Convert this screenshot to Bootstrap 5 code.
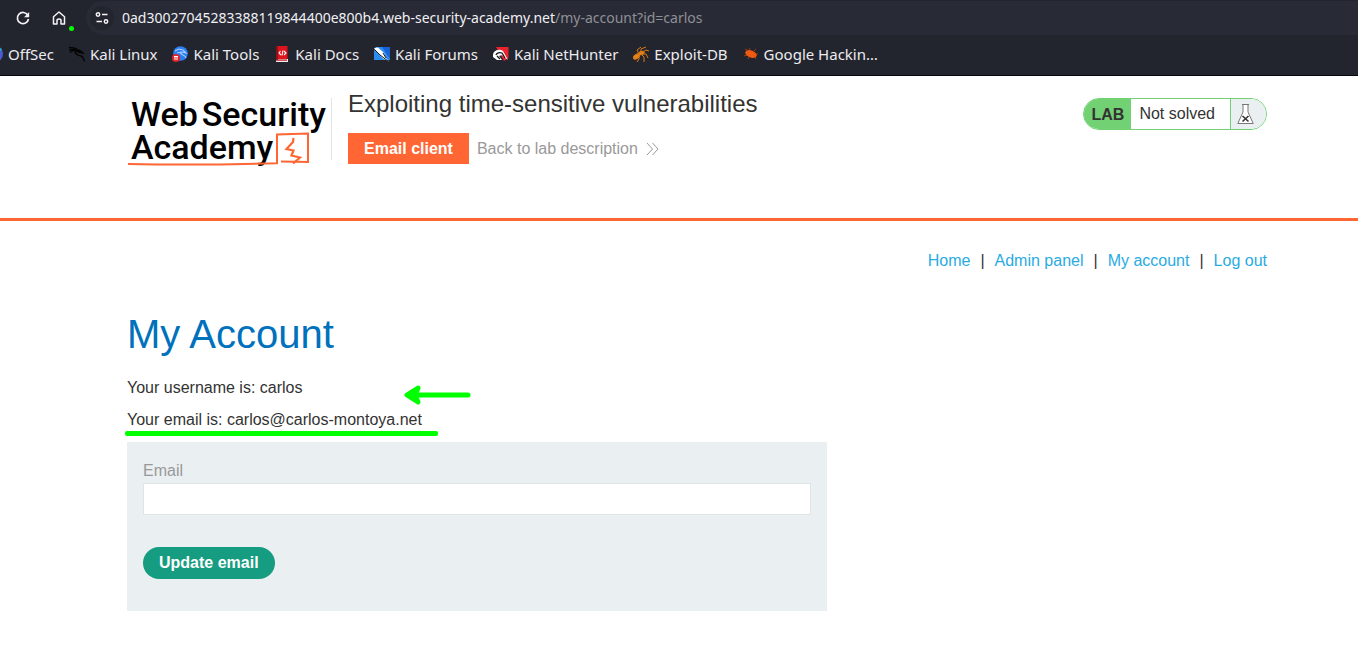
<!DOCTYPE html>
<html lang="en">
<head>
<meta charset="utf-8">
<meta name="viewport" content="width=device-width, initial-scale=1">
<title>Exploiting time-sensitive vulnerabilities</title>
<link rel="stylesheet" href="https://cdn.jsdelivr.net/npm/bootstrap@5.3.0/dist/css/bootstrap.min.css">
<style>
body{font-family:"Liberation Sans",Arial,sans-serif;font-size:16px;line-height:24px;color:#333332;background:#fff;overflow-x:hidden}
a{text-decoration:none}
svg{display:block;flex:none}
.browser{background:#23252e;color:#f0f0f4;font-family:"Noto Sans",sans-serif;border-bottom:1px solid #08080c}
.toolbar{height:36px;padding-left:15px}
.tool{width:16px;height:16px;padding:0;border:0;background:none;color:#f4f4f6}
.tool-home{margin-left:20px}
.address{height:34px;margin-left:19px;background:#282a35;border-radius:17px 0 0 17px;padding-left:4px;font-size:14px}
.site-info{width:24px;height:24px;border:0;border-radius:50%;background:#23252e;color:#f4f4f6;padding:0 4px;margin-right:8px}
.url-path{color:#8f9097}
.marks{height:39px;font-size:15px;gap:15px;padding-bottom:3px}
.marks a{color:#ececf0;gap:5px}
.marks svg{width:16px;height:16px}
.first-mark{margin-left:-13px}
.record-dot{position:absolute;left:69px;top:26px;width:5px;height:5px;border-radius:50%;background:#0f0}
.page{padding-left:36px}
.site-head{height:145px;border-bottom:3px solid #f63;padding-top:14px}
.logo{position:relative;width:199px;height:76px;margin-left:1px;color:#000;font-family:Roboto,sans-serif;font-weight:500;font-size:34px;line-height:33px;padding:8px 0 0 3px}
.logo:hover{color:#000}
.logo-line{position:absolute;left:0;top:40px}
.divider{width:1px;height:62px;background:#e4e4e4;margin:8px 16px 0 4px}
.lab-title{font-size:24px;line-height:28px;font-weight:400;margin:0 0 15px}
.btn-client{background:#f63;color:#fff;font-weight:700;line-height:31px;border:0;border-radius:0;padding:0 16px}
.btn-client:hover{background:#e55a2b;color:#fff}
.back{color:#999}
.lab-status{height:32px;margin-top:8px;border:1px solid #72d172;border-radius:16px;overflow:hidden;line-height:30px}
.lab-tag{background:#72d172;font-weight:700;padding:1px 7px 0 8px}
.lab-state{padding:0 15px 0 8px}
.lab-flask{background:#eaeff2;border-left:1px solid #72d172;width:36px;padding:5px 0 0 6px}
.links{padding-top:28px;gap:10px}
.links a{color:#29abe2}
h1{color:#0071bc;font-size:40px;line-height:48px;font-weight:400;margin:37px 0 18px}
.account p{margin:0 0 8px}
.panel{max-width:700px;background:#eaeff2;padding:17px 16px 32px;margin-top:10px}
.panel .form-control{height:32px;border:1px solid #e1e4e6;border-radius:0;margin-bottom:32px}
.panel label{color:#999}
.btn-update{background:#169c80;color:#fff;font-weight:700;border:0;border-radius:16px;height:32px;padding:0 16px;line-height:32px}
.btn-update:hover{background:#128068;color:#fff}
.arrow{position:absolute;left:276px;top:-24px}
.underline{position:absolute;left:-2px;top:23px}
</style>
<script src="https://cdn.jsdelivr.net/npm/bootstrap@5.3.0/dist/js/bootstrap.bundle.min.js"></script>
</head>
<body>
<div class="browser position-relative">
  <div class="toolbar d-flex align-items-center">
    <button class="tool" aria-label="Reload"><svg width="16" height="16" viewBox="0 0 16 16" fill="none" stroke="currentColor" stroke-width="1.7"><path d="M12.8 5.2A5.6 5.6 0 1 0 13.5 9"/><path d="M14.2 2v5.2H9z" fill="currentColor" stroke="none"/></svg></button>
    <button class="tool tool-home" aria-label="Home"><svg width="16" height="16" viewBox="0 0 16 16" fill="none" stroke="currentColor" stroke-width="1.5" stroke-linejoin="round"><path d="M2.5 14V6.7L8 2l5.500 4.700V14H10V10.500q0-1.500-2-1.500t-2 1.500V14z"/></svg></button>
    <div class="address d-flex align-items-center flex-grow-1">
      <button class="site-info" aria-label="Site information"><svg width="16" height="16" viewBox="0 0 16 16" fill="none" stroke="currentColor" stroke-width="1.5"><circle cx="4" cy="4.500" r="1.700"/><path d="M8 4.500h5.500M2.500 11.500H8"/><circle cx="12" cy="11.500" r="1.700"/></svg></button>
      <span class="text-nowrap">0ad30027045283388119844400e800b4.web-security-academy.net<span class="url-path">/my-account?id=carlos</span></span>
    </div>
  </div>
  <nav class="marks d-flex align-items-center text-nowrap" aria-label="Bookmarks">
    <a class="first-mark d-flex align-items-center" href="#"><svg viewBox="0 0 16 16"><circle cx="8" cy="8" r="8" fill="#4b5bd0"/><path d="M8 0a8 8 0 0 1 7 4L9 8z" fill="#27a5c8"/></svg>OffSec</a>
    <a class="d-flex align-items-center" href="#"><svg viewBox="0 0 16 16" fill="none" stroke="#050506" stroke-width="1.400"><path d="M0 1.500l5 .5 3 1.500M0 4l5-.5M1 6.500L5 4"/><path d="M4 3l4 .5 3 1 3 2.500-3-.5-3-1z" fill="#050506"/><path d="M6 5c-1 5 6 3.500 8 6.500l1.500 4M14 11l-2-1"/></svg>Kali Linux</a>
    <a class="d-flex align-items-center" href="#"><svg viewBox="0 0 16 16"><circle cx="8.500" cy="7.500" r="7.300" fill="#2b7df0"/><path d="M3 5l4-2 4 1 3 3-4-1-5 1M8 6c1 4 5 2 6 6" fill="none" stroke="#a9cfff" stroke-width="1.100"/><circle cx="4" cy="12" r="4" fill="#e42329"/><path d="M2 10.500h4M3 10.500v3.500M5 10.500v3.500" stroke="#fff" stroke-width="1"/></svg>Kali Tools</a>
    <a class="d-flex align-items-center" href="#"><svg viewBox="0 0 16 16"><path d="M2.500 0h11v13h-11z" fill="#dd141b"/><path d="M2 13h12v3H2z" fill="#eee"/><path d="M2 0h2v14H2z" fill="#8e1117"/><path d="M2 13.500h11v1.200H2z" fill="#c01319"/><path d="M6.500 5L5 7l2 2M10 5l2 2-2 2M9 4.500L8 9.500" fill="none" stroke="#fff" stroke-width="1.100"/></svg>Kali Docs</a>
    <a class="d-flex align-items-center" href="#"><svg viewBox="0 0 16 16"><path d="M2 1h14v13H0V5z" fill="#2b8df0"/><path d="M8 1h8v12z" fill="#1762d6"/><path d="M0 2l4-.5 6 5.500 2 5 3 3.500-6-3-5-5z" fill="#fff"/><path d="M1 4l5 5 4 3 4 3M9 7l3 5" fill="none" stroke="#15171c"/></svg>Kali Forums</a>
    <a class="d-flex align-items-center" href="#"><svg viewBox="0 0 16 16"><path d="M3 1h12.500v11L11 15z" fill="#e9232e"/><path d="M0 9a6 5 0 0 1 10-4l5 9-4-3-2-2-3 1 3 4H4l-4-3z" fill="#fff"/><path d="M3 9a4 3 0 0 1 6-2l3 5M4 10l3 3" fill="none" stroke="#15171c" stroke-width="1.300"/></svg>Kali NetHunter</a>
    <a class="d-flex align-items-center" href="#"><svg viewBox="0 0 16 16" fill="none" stroke="#d87914" stroke-width="1"><ellipse cx="3.500" cy="10.500" rx="3.500" ry="2" transform="rotate(-35 3.500 10.500)" fill="#e48519"/><ellipse cx="8.500" cy="7" rx="2.800" ry="1.500" transform="rotate(-20 8.500 7)" fill="#e48519"/><path d="M6 8L4 4l4-3M8 7L8 3l5-2M10 6l3-2 3 1M9 8l4 0 2 4M8 8l3 3v5M6 9l0 4-2 3"/></svg>Exploit-DB</a>
    <a class="d-flex align-items-center" href="#"><svg viewBox="0 0 16 16" fill="none" stroke="#9a3d14"><path d="M4 4L2 3M7 4L6 2M11 5l2-2M4 9l-3 1M6 11l-1 2M12 11l1 2M13 8h2" /><ellipse cx="8" cy="8" rx="6" ry="3.500" transform="rotate(20 8 8)" fill="#ef5a10" stroke="none"/></svg>Google Hackin…</a>
  </nav>
  <span class="record-dot"></span>
</div>

<header class="page site-head">
  <div class="container px-0 d-flex align-items-start">
    <a class="logo" href="#" aria-label="Web Security Academy">
      <span class="d-flex gap-1 text-nowrap"><span>Web</span><span>Security</span></span>
      <span class="d-block">Academy</span>
      <svg class="logo-line" width="186" height="40" viewBox="0 0 186 40" fill="none" stroke="#f63"><path d="M0 34q70 1.500 149-.8V4.500l31-1V32l-27-.5" stroke-width="2"/><path d="M165.500 8l-.5 4-6.500 7 7 1.500-2 5 8.500 2-7 6" stroke-width="2.200"/></svg>
    </a>
    <div class="divider"></div>
    <div class="flex-grow-1">
      <h2 class="lab-title">Exploiting time-sensitive vulnerabilities</h2>
      <div class="d-flex align-items-center gap-2">
        <button class="btn btn-client">Email client</button>
        <a class="back d-flex align-items-center gap-2" href="#">Back to lab description
          <svg width="13" height="14" viewBox="0 0 13 14" fill="none" stroke="#999"><path d="M1 1l5.500 6L1 13M6.500 1l5.500 6-5.500 6"/></svg></a>
      </div>
    </div>
    <div class="lab-status d-flex">
      <span class="lab-tag">LAB</span>
      <span class="lab-state">Not solved</span>
      <span class="lab-flask"><svg width="17" height="20" viewBox="0 0 17 20"><path d="M5 .5h7M6 1v7L.8 19.500h15.400L11 8V1" fill="#fff" stroke="#777"/><path d="M5.500 12l6 5.500M11.500 12l-6 5.500" stroke="#333" stroke-width="1.600"/></svg></span>
    </div>
  </div>
</header>

<main class="page account">
  <div class="container px-0">
    <nav class="links d-flex justify-content-end" aria-label="Account">
      <a href="#">Home</a><span>|</span><a href="#">Admin panel</a><span>|</span><a href="#">My account</a><span>|</span><a href="#">Log out</a>
    </nav>
    <h1>My Account</h1>
    <p>Your username is: carlos</p>
    <div class="position-relative">
      <p>Your email is: carlos@carlos-montoya.net</p>
      <svg class="arrow" width="70" height="22" viewBox="0 0 70 22" fill="none" stroke="#0f0" stroke-width="5" stroke-linecap="round" stroke-linejoin="round"><path d="M14 11H65"/><path d="M15 4L4 11l11 7-3-7z" fill="#0f0"/></svg>
      <svg class="underline" width="313" height="5"><rect width="313" height="5" rx="2" fill="#0f0"/></svg>
    </div>
    <form class="panel">
      <label class="d-block" for="email">Email</label>
      <input class="form-control" type="email" id="email">
      <button class="btn btn-update" type="button">Update email</button>
    </form>
  </div>
</main>
</body>
</html>
